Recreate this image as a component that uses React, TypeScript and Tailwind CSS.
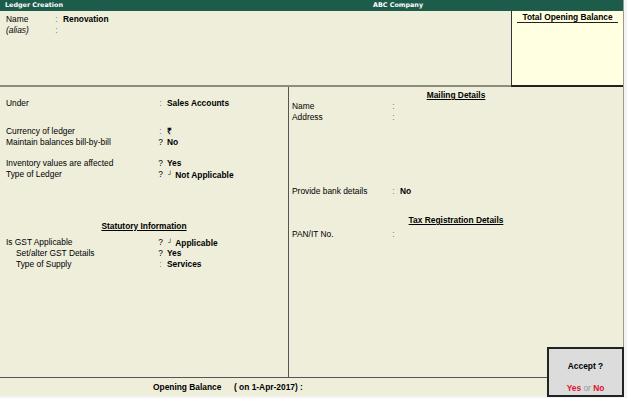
import React from 'react';

type RowProps = {
  label: string;
  mark?: string;
  value?: React.ReactNode;
  labelW: string;
  italic?: boolean;
};

const Row: React.FC<RowProps> = ({ label, mark = ':', value, labelW, italic }) => (
  <div className="flex h-[11px] leading-[11px] whitespace-nowrap">
    <div className={`${labelW} ${italic ? 'italic' : ''}`}>{label}</div>
    <div className={`w-[7px] text-center ${mark === ':' ? 'text-[#777]' : 'text-black'}`}>{mark}</div>
    <div className="ml-[3px] font-bold">{value}</div>
  </div>
);

const Drop: React.FC<{ text: string }> = ({ text }) => (
  <span>
    <span className="text-[6px] font-normal align-[2px] ml-[1px] mr-[3px]">┘</span>
    {text}
  </span>
);

const Heading: React.FC<{ children: React.ReactNode }> = ({ children }) => (
  <div className="h-[11px] leading-[11px] text-center font-bold underline underline-offset-[1px]">{children}</div>
);

const App: React.FC = () => {
  return (
    <div className="w-[627px] h-[398px] bg-[#f3f3f3] font-['Liberation_Sans',Arial,sans-serif] text-[8.4px] text-black">
      <div className="relative w-[624px] h-[396px] flex flex-col bg-[#eeeedb] border-r border-[#9a9a90]">
        {/* title bar */}
        <div className="h-[11px] bg-[#1d5c4b] flex items-center text-white font-['DejaVu_Sans',Verdana,sans-serif] font-bold text-[6.4px]">
          <div className="w-[373px] pl-[5px]">Ledger Creation</div>
          <div>ABC Company</div>
        </div>

        {/* name area */}
        <div className="h-[76px] flex">
          <div className="flex-1 border-b-2 border-[#8c8c80] pt-[3px]">
            <Row label="Name" labelW="w-[53px] pl-[6px]" value="Renovation" />
            <Row label="(alias)" labelW="w-[53px] pl-[6px]" italic value="" />
          </div>
          <div className="w-[112px] bg-[#ffffe1] border-l border-[#333] border-b-2 border-b-[#222] pt-[1px]">
            <div className="mx-[5px] text-center font-bold border-b border-[#222] leading-[10px]">Total Opening Balance</div>
          </div>
        </div>

        {/* main */}
        <div className="flex-1 flex">
          <div className="w-[289px] border-r border-[#555]">
            <div className="mt-[11px]">
              <Row label="Under" labelW="w-[157px] pl-[6px]" value="Sales Accounts" />
            </div>
            <div className="mt-[17px]">
              <Row label="Currency of ledger" labelW="w-[157px] pl-[6px]" value="₹" />
              <Row label="Maintain balances bill-by-bill" labelW="w-[157px] pl-[6px]" mark="?" value="No" />
            </div>
            <div className="mt-[10px]">
              <Row label="Inventory values are affected" labelW="w-[157px] pl-[6px]" mark="?" value="Yes" />
              <Row label="Type of Ledger" labelW="w-[157px] pl-[6px]" mark="?" value={<Drop text="Not Applicable" />} />
            </div>
            <div className="mt-[41px]">
              <Heading>Statutory Information</Heading>
            </div>
            <div className="mt-[5px]">
              <Row label="Is GST Applicable" labelW="w-[157px] pl-[6px]" mark="?" value={<Drop text="Applicable" />} />
              <Row label="Set/alter GST Details" labelW="w-[157px] pl-[16px]" mark="?" value="Yes" />
              <Row label="Type of Supply" labelW="w-[157px] pl-[16px]" value="Services" />
            </div>
          </div>

          <div className="flex-1">
            <div className="mt-[3px]">
              <Heading>Mailing Details</Heading>
            </div>
            <Row label="Name" labelW="w-[101px] pl-[3px]" value="" />
            <Row label="Address" labelW="w-[101px] pl-[3px]" value="" />
            <div className="mt-[63px]">
              <Row label="Provide bank details" labelW="w-[101px] pl-[3px]" value="No" />
            </div>
            <div className="mt-[18px]">
              <Heading>Tax Registration Details</Heading>
            </div>
            <div className="mt-[3px]">
              <Row label="PAN/IT No." labelW="w-[101px] pl-[3px]" value="" />
            </div>
          </div>
        </div>

        {/* opening balance */}
        <div className="h-[19px] flex items-center border-t border-[#555] font-bold whitespace-nowrap">
          <div className="pl-[153px] w-[234px]">Opening Balance</div>
          <div>( on 1-Apr-2017) :</div>
        </div>

        {/* accept box */}
        <div className="absolute left-[547px] top-[347px] w-[77px] h-[50px] bg-[#dcdcdc] border-2 border-[#222] flex flex-col items-center font-bold">
          <div className="mt-[11px]">Accept ?</div>
          <div className="mt-[9px] whitespace-nowrap">
            <span className="text-[#e0102a]">Yes</span>
            <span className="font-normal text-[#999]"> or </span>
            <span className="text-[#e0102a]">No</span>
          </div>
        </div>
      </div>
    </div>
  );
};

export default App;
